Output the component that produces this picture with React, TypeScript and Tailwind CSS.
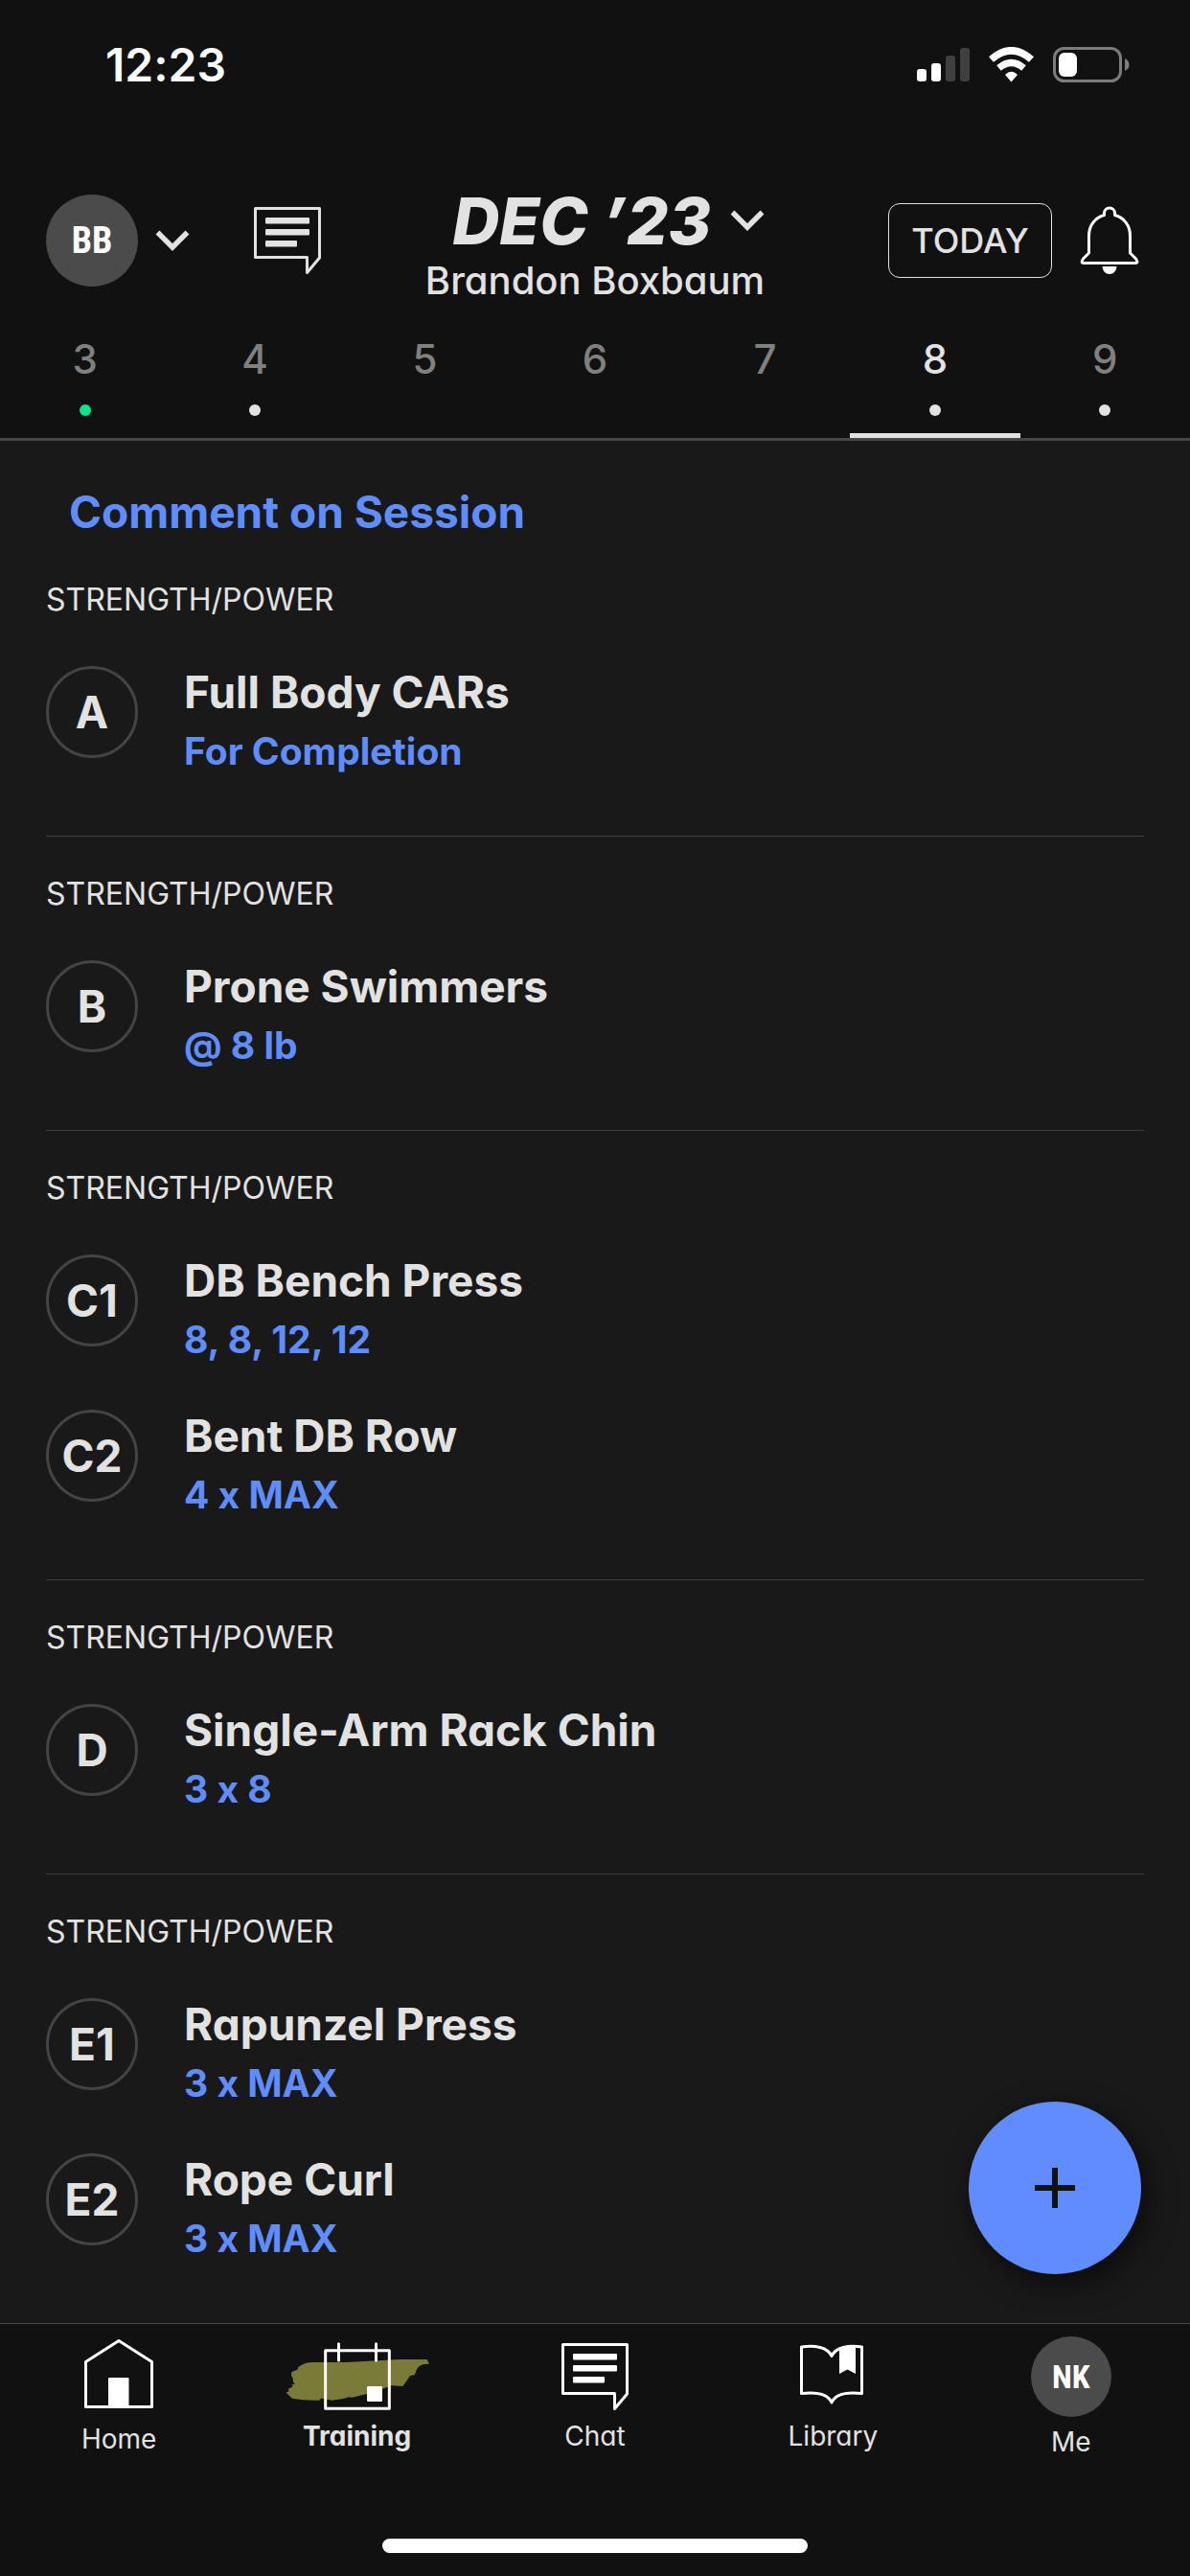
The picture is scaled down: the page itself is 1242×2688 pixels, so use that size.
import React, { useState } from 'react';

interface Exercise {
  label: string;
  name: string;
  detail: string;
}

interface Block {
  id: string;
  category: string;
  exercises: Exercise[];
}

interface Day {
  day: number;
  dot?: 'done' | 'planned';
}

const days: Day[] = [
  { day: 3, dot: 'done' },
  { day: 4, dot: 'planned' },
  { day: 5 },
  { day: 6 },
  { day: 7 },
  { day: 8, dot: 'planned' },
  { day: 9, dot: 'planned' },
];

const blocks: Block[] = [
  {
    id: 'a',
    category: 'STRENGTH/POWER',
    exercises: [{ label: 'A', name: 'Full Body CARs', detail: 'For Completion' }],
  },
  {
    id: 'b',
    category: 'STRENGTH/POWER',
    exercises: [{ label: 'B', name: 'Prone Swimmers', detail: '@ 8 lb' }],
  },
  {
    id: 'c',
    category: 'STRENGTH/POWER',
    exercises: [
      { label: 'C1', name: 'DB Bench Press', detail: '8, 8, 12, 12' },
      { label: 'C2', name: 'Bent DB Row', detail: '4 x MAX' },
    ],
  },
  {
    id: 'd',
    category: 'STRENGTH/POWER',
    exercises: [{ label: 'D', name: 'Single-Arm Rack Chin', detail: '3 x 8' }],
  },
  {
    id: 'e',
    category: 'STRENGTH/POWER',
    exercises: [
      { label: 'E1', name: 'Rapunzel Press', detail: '3 x MAX' },
      { label: 'E2', name: 'Rope Curl', detail: '3 x MAX' },
    ],
  },
];

const ChevronIcon = () => (
  <svg width="36" height="24" viewBox="0 0 36 24" fill="none" aria-hidden="true">
    <path d="M2.5 3.5 18 19 33.5 3.5" stroke="currentColor" strokeWidth="5.5" />
  </svg>
);

const ChatIcon = () => (
  <svg width="72" height="72" viewBox="0 0 72 72" fill="none" aria-hidden="true">
    <path
      d="M2.5 2.5H69.5V54L56.5 69.5V53.5H2.5Z"
      stroke="currentColor"
      strokeWidth="3"
      strokeLinejoin="round"
    />
    <rect x="13" y="12" width="46" height="6.5" rx="1" fill="currentColor" />
    <rect x="13" y="24" width="46" height="6.5" rx="1" fill="currentColor" />
    <rect x="13" y="36" width="33" height="6.5" rx="1" fill="currentColor" />
  </svg>
);

const BellIcon = () => (
  <svg width="69" height="72" viewBox="0 0 69 72" fill="none" aria-hidden="true">
    <path
      d="M27.5 9.5V7.5a5.5 5.5 0 0 1 11 0V9.5C48 12 54.5 20 54.5 31V49L60.500 55Q63.500 59.500 60 59.500H6Q2.500 59.500 5.500 55L11.500 49V31C11.500 20 18 12 27.500 9.500Z"
      stroke="currentColor"
      strokeWidth="3"
      strokeLinejoin="round"
    />
    <path d="M25.500 63H40.500A7.500 8 0 0 1 25.500 63Z" fill="currentColor" />
  </svg>
);

const HomeIcon = () => (
  <svg width="72" height="78" viewBox="0 0 72 78" fill="none" aria-hidden="true">
    <path d="M1.5 23.5 36 1.5 70.5 23.5V70.5H1.5Z" stroke="currentColor" strokeWidth="3" strokeLinejoin="round" />
    <rect x="25" y="40" width="21.5" height="31" rx="1" fill="currentColor" />
  </svg>
);

const TrainingIcon = () => (
  <svg width="150" height="72" viewBox="891 132 450 216" fill="none" aria-hidden="true">
    <path
      d="M929 212Q945 197 972 195L1080 195L1180 190L1250 186L1334 186L1341 201Q1322 199 1311 206Q1300 216 1296 234L1281 237Q1274 248 1269 255L1258 270L1224 268Q1190 281 1146 294L1100 305L1090 304L1072 309L1036 314L1012 309L1000 308L998 314Q955 316 912 308L893 290L902 285L899 279L915 270L909 266L921 262L915 258Q917 246 909 236L910 226L931 217Z"
      fill="#7a7b38"
    />
    <rect x="1016" y="158" width="200" height="182" stroke="white" strokeWidth="9" strokeLinejoin="round" />
    <path d="M1057.5 137V189M1174.5 137V189" stroke="white" strokeWidth="9" strokeLinecap="round" />
    <rect x="1146" y="270" width="48" height="48" rx="4" fill="white" />
  </svg>
);

const LibraryIcon = () => (
  <svg width="72" height="72" viewBox="-2 0 72 72" fill="none" aria-hidden="true">
    <path
      d="M1.5 5C15 3 29 5 33 14.5C37 5 51 3 64.5 5V53.500C51 52 37 53.500 33 63C29 53.500 15 52 1.500 53.500Z"
      stroke="currentColor"
      strokeWidth="3"
      strokeLinejoin="round"
    />
    <path d="M41 5.5Q49 3.5 58 5V33L49.5 28.5L41 33Z" fill="currentColor" />
  </svg>
);

const StatusIcons = () => (
  <svg width="222" height="38" viewBox="957 49 222 38" fill="none" aria-hidden="true">
    <rect x="957" y="72" width="10" height="13" rx="3" fill="white" />
    <rect x="972" y="66" width="10" height="19" rx="3" fill="white" />
    <rect x="987" y="58" width="10" height="27" rx="3" fill="#3f3f3f" />
    <rect x="1002" y="50" width="10" height="35" rx="3" fill="#3f3f3f" />
    <path d="M1034.5 62Q1055.5 43.5 1076.5 62" stroke="white" strokeWidth="7.5" />
    <path d="M1042.5 71Q1055.5 60 1068.5 71" stroke="white" strokeWidth="7" />
    <path d="M1049 78Q1055.5 71.5 1062 78L1055.5 85.5Z" fill="white" />
    <rect x="1100.5" y="50.5" width="69" height="34" rx="10" stroke="#7c7c7c" strokeWidth="3" />
    <path d="M1174 61Q1178.5 63 1178.5 67.5T1174 74Z" fill="#7c7c7c" />
    <rect x="1105" y="55" width="19" height="25" rx="6" fill="white" />
  </svg>
);

const tabs = [
  { name: 'Home', icon: <HomeIcon /> },
  { name: 'Training', icon: <TrainingIcon /> },
  { name: 'Chat', icon: <ChatIcon /> },
  { name: 'Library', icon: <LibraryIcon /> },
  {
    name: 'Me',
    icon: (
      <span className="flex size-[84px] items-center justify-center rounded-full bg-[#4b4b4b] font-['Roboto_Condensed','Roboto',sans-serif] text-[34px] leading-none font-bold">
        NK
      </span>
    ),
  },
];

const App: React.FC = () => {
  const [selectedDay, setSelectedDay] = useState(8);
  const [activeTab, setActiveTab] = useState('Training');

  return (
    <div className="flex min-h-screen flex-col bg-[#191919] font-['Inter','Liberation_Sans',sans-serif] text-[#e2e2e2] [font-feature-settings:'cv11','calt'_0]">
      <header className="border-b-[3px] border-[#464646] bg-[#111111]">
        <div className="flex h-[136px] items-center justify-between pr-[63px] pl-[110px] text-white">
          <span className="text-[48px] leading-none font-semibold">12:23</span>
          <StatusIcons />
        </div>

        <div className="grid grid-cols-[1fr_auto_1fr] items-center px-12 pt-[52px]">
          <div className="flex items-center">
            <button type="button" aria-label="Switch athlete" className="flex items-center gap-[18px]">
              <span className="flex size-24 items-center justify-center rounded-full bg-[#4b4b4b] font-['Roboto_Condensed','Roboto',sans-serif] text-[38px] leading-none font-bold text-white">
                BB
              </span>
              <ChevronIcon />
            </button>
            <button type="button" aria-label="Messages" className="ml-[66px]">
              <ChatIcon />
            </button>
          </div>

          <div className="flex flex-col items-end">
            <button type="button" className="flex items-center gap-5">
              <span className="text-[68px] leading-[84px] font-extrabold italic">DEC ’23</span>
              <ChevronIcon />
            </button>
            <span className="text-[40px] leading-[42px] font-medium">Brandon Boxbaum</span>
          </div>

          <div className="flex items-center justify-end gap-[27px]">
            <button
              type="button"
              className="h-[78px] w-[171px] rounded-xl border border-[#e2e2e2] text-[36px] leading-none font-medium"
            >
              TODAY
            </button>
            <button type="button" aria-label="Notifications" className="text-white">
              <BellIcon />
            </button>
          </div>
        </div>

        <nav aria-label="Days" className="grid grid-cols-7">
          {days.map(({ day, dot }) => (
            <button
              key={day}
              type="button"
              onClick={() => setSelectedDay(day)}
              className={`flex flex-col items-center border-b-[5px] pt-10 pb-[18px] ${
                day === selectedDay ? 'border-[#e2e2e2] text-[#e2e2e2]' : 'border-transparent text-[#808080]'
              }`}
            >
              <span className="text-[42px] leading-[42px] font-medium">{day}</span>
              <span
                className={`mt-[26px] size-3 rounded-full ${
                  dot === 'done' ? 'bg-[#0be58f]' : dot === 'planned' ? 'bg-[#e2e2e2]' : 'bg-transparent'
                }`}
              ></span>
            </button>
          ))}
        </nav>
      </header>

      <main className="relative flex-1 px-12 pt-12">
        <a href="#comment" className="mb-1.5 block pl-6 text-[46px] leading-[52px] font-bold text-[#5f8dff]">
          Comment on Session
        </a>

        {blocks.map((block) => (
          <section key={block.id} className="border-b border-[#3e3e3e] pt-10 pb-[61px] last-of-type:border-b-0">
            <h2 className="text-[32px] leading-10">{block.category}</h2>
            <ul className="mt-[49px] flex flex-col gap-[46px]">
              {block.exercises.map((exercise) => (
                <li key={exercise.label} className="flex items-start gap-12">
                  <span className="flex size-24 shrink-0 items-center justify-center rounded-full border-[3px] border-[#444444] text-[46px] leading-none font-bold">
                    {exercise.label}
                  </span>
                  <div>
                    <h3 className="text-[46px] leading-[54px] font-bold">{exercise.name}</h3>
                    <p className="mt-2 text-[39px] leading-[54px] font-bold text-[#5f8dff]">{exercise.detail}</p>
                  </div>
                </li>
              ))}
            </ul>
          </section>
        ))}

        <button
          type="button"
          aria-label="Add"
          className="absolute right-[51px] bottom-[51px] flex size-[180px] items-center justify-center rounded-full bg-[#5f8dff] text-[#111111] shadow-[6px_9px_30px_rgba(0,0,0,0.6)]"
        >
          <svg width="42" height="42" viewBox="0 0 42 42" aria-hidden="true">
            <path d="M21 0V42M0 21H42" stroke="currentColor" strokeWidth="6" />
          </svg>
        </button>
      </main>

      <footer className="border-t border-[#464646] bg-[#111111] pt-[13px] pb-6">
        <nav aria-label="Main" className="grid grid-cols-5 items-center">
          {tabs.map((tab) => (
            <button
              key={tab.name}
              type="button"
              onClick={() => setActiveTab(tab.name)}
              className="flex flex-col items-center gap-2 text-white"
            >
              {tab.icon}
              <span
                className={`text-[28px] leading-9 text-[#e2e2e2] ${tab.name === activeTab ? 'font-bold' : 'font-normal'}`}
              >
                {tab.name}
              </span>
            </button>
          ))}
        </nav>
        <div className="mx-auto mt-[83px] h-[15px] w-[444px] rounded-full bg-white"></div>
      </footer>
    </div>
  );
};

export default App;
